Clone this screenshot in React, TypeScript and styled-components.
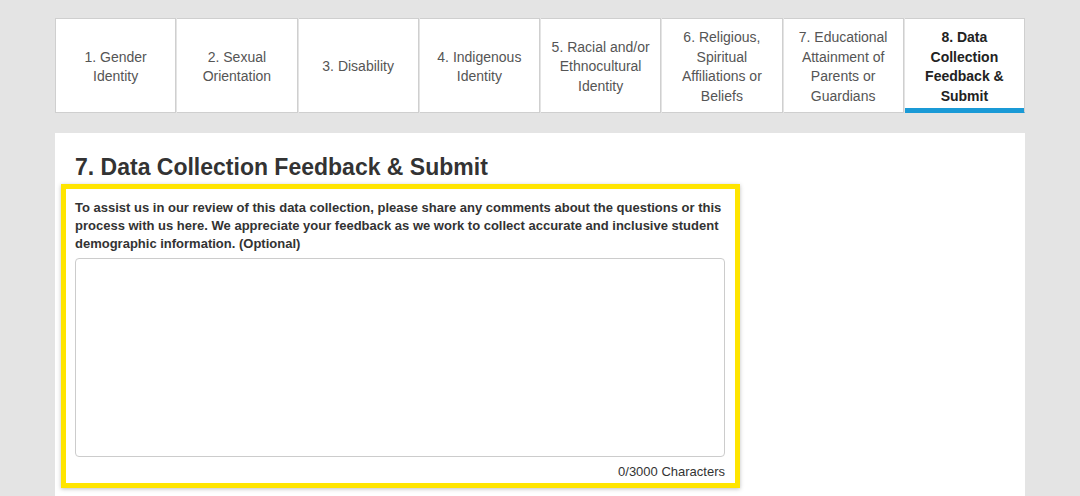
import styled, { createGlobalStyle } from 'styled-components'

const steps = [
	'1. Gender Identity',
	'2. Sexual Orientation',
	'3. Disability',
	'4. Indigenous Identity',
	'5. Racial and/or Ethnocultural Identity',
	'6. Religious, Spiritual Affiliations or Beliefs',
	'7. Educational Attainment of Parents or Guardians',
	'8. Data Collection Feedback & Submit',
]

const App = () => {
	const active = 7
	const max = 3000
	return (
		<>
			<GlobalStyle />
			<Page>
				<Tabs>
					{steps.map((step, i) => (
						<Tab key={step} $active={i === active}>
							<span>{step}</span>
						</Tab>
					))}
				</Tabs>
				<Panel>
					<Heading>7. Data Collection Feedback &amp; Submit</Heading>
					<Highlight>
						<Label htmlFor='feedback'>
							To assist us in our review of this data collection, please share any comments
							about the questions or this process with us here. We appreciate your feedback as
							we work to collect accurate and inclusive student demographic information.
							(Optional)
						</Label>
						<TextArea id='feedback' maxLength={max} />
						<Counter>0/{max} Characters</Counter>
					</Highlight>
				</Panel>
			</Page>
		</>
	)
}

export default App

const GlobalStyle = createGlobalStyle`
	html, body {
		margin: 0;
		background: #e4e4e4;
		font-family: 'Liberation Sans', Arial, sans-serif;
	}
`

const Page = styled.div`
	width: 970px;
	margin: 18px 0 0 55px;
`

const Tabs = styled.div`
	display: flex;
	height: 95px;
`

const Tab = styled.div<{ $active?: boolean }>`
	flex: 1;
	display: flex;
	align-items: center;
	justify-content: center;
	text-align: center;
	padding: 3px 10px 0;
	background: #fff;
	border: 1px solid #cfcfcf;
	border-bottom-color: ${p => (p.$active ? '#1a9ad6' : '#cfcfcf')};
	box-shadow: ${p => (p.$active ? 'inset 0 -4px 0 #1a9ad6' : 'none')};
	font-size: 14px;
	line-height: 19.5px;
	color: ${p => (p.$active ? '#222' : '#555')};
	font-weight: ${p => (p.$active ? 700 : 400)};

	& + & {
		border-left: none;
		margin-left: 1px;
	}
`

const Panel = styled.div`
	margin-top: 20px;
	min-height: 400px;
	background: #fff;
	padding: 20px 6px;
`

const Heading = styled.h2`
	margin: 0 0 3px 14px;
	font-size: 23px;
	line-height: 28px;
	font-weight: 700;
	color: #333;
`

const Highlight = styled.div`
	width: 650px;
	padding: 10px 10px 2px 9px;
	border: 5px solid #ffe500;
	box-shadow: 0 1px 4px rgba(0, 0, 0, 0.25);
`

const Label = styled.label`
	display: block;
	font-size: 13px;
	line-height: 18px;
	font-weight: 700;
	color: #333;
`

const TextArea = styled.textarea`
	display: block;
	box-sizing: border-box;
	width: 100%;
	height: 199px;
	margin-top: 5px;
	border: 1px solid #ccc;
	border-radius: 4px;
	resize: none;
	font-family: inherit;
	font-size: 13px;
	outline: none;
`

const Counter = styled.div`
	margin-top: 6px;
	text-align: right;
	font-size: 13px;
	line-height: 18px;
	color: #333;
`
